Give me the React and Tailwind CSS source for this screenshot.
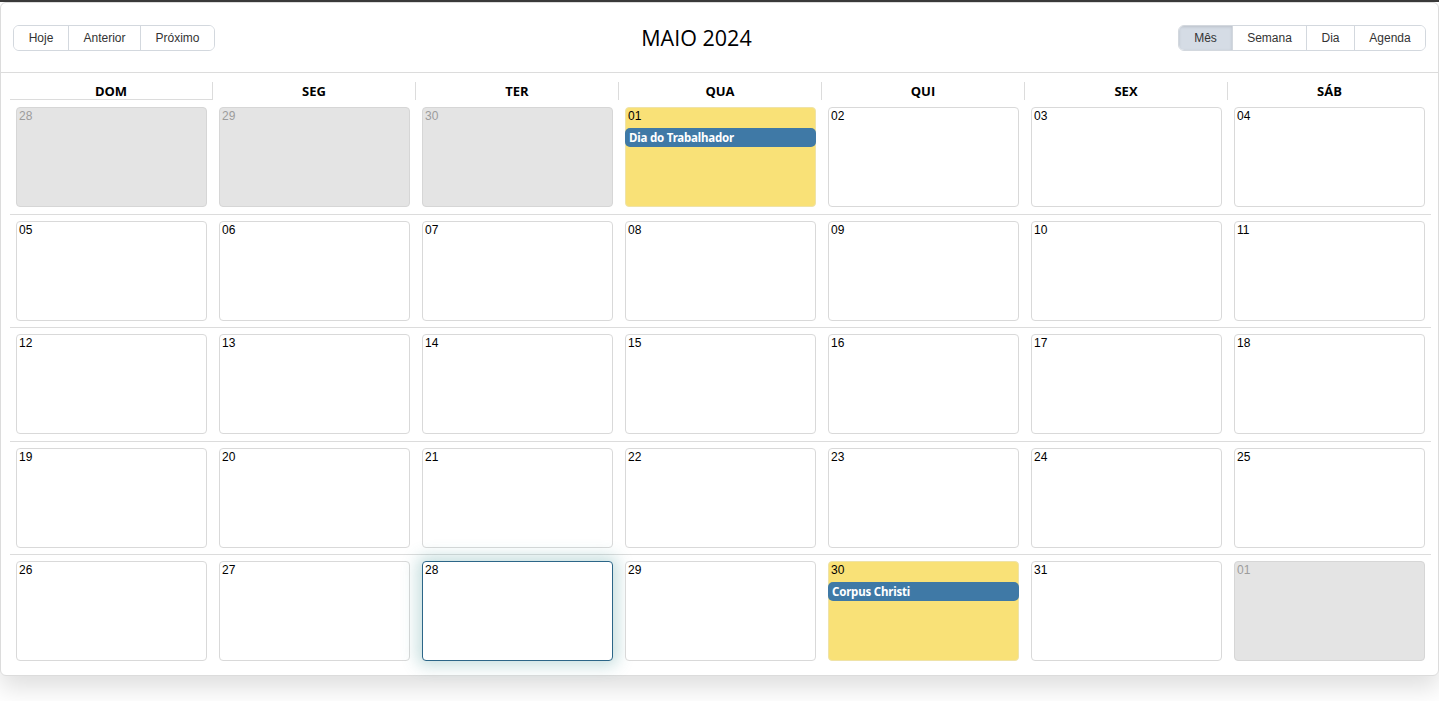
import React from 'react';

const WEEKDAYS = ['DOM', 'SEG', 'TER', 'QUA', 'QUI', 'SEX', 'SÁB'];

// May 2024 grid, starting on Sunday 28/04
const weeks = [
  [{ d: '28', off: true }, { d: '29', off: true }, { d: '30', off: true }, { d: '01', holiday: 'Dia do Trabalhador' }, { d: '02' }, { d: '03' }, { d: '04' }],
  [{ d: '05' }, { d: '06' }, { d: '07' }, { d: '08' }, { d: '09' }, { d: '10' }, { d: '11' }],
  [{ d: '12' }, { d: '13' }, { d: '14' }, { d: '15' }, { d: '16' }, { d: '17' }, { d: '18' }],
  [{ d: '19' }, { d: '20' }, { d: '21' }, { d: '22' }, { d: '23' }, { d: '24' }, { d: '25' }],
  [{ d: '26' }, { d: '27' }, { d: '28', today: true }, { d: '29' }, { d: '30', holiday: 'Corpus Christi' }, { d: '31' }, { d: '01', off: true }],
];

function Group({ items, active }) {
  return (
    <div className="flex h-[26px] rounded-[6px] border border-[#d3d8de] overflow-hidden font-['Liberation_Sans',Arial,sans-serif] text-[12px] text-[#333]">
      {items.map((it, i) => (
        <button
          key={it.label}
          className={`${it.w} flex items-center justify-center ${i > 0 ? 'border-l border-[#d3d8de]' : ''} ${active === it.label ? 'bg-[#d5dce5] shadow-[inset_0_1px_3px_rgba(0,0,0,0.12)]' : 'bg-white'}`}
        >
          {it.label}
        </button>
      ))}
    </div>
  );
}

function DayCell({ day }) {
  let cls = 'h-[100px] rounded-[4px] border ';
  if (day.off) cls += 'bg-[#e4e4e4] border-[#d6d6d6] text-[#9c9c9c]';
  else if (day.holiday) cls += 'bg-[#f9e177] border-[#efe3a8] text-black';
  else if (day.today) cls += 'bg-white border-[#2c6688] text-black shadow-[0_0_16px_5px_rgba(70,150,150,0.3)]';
  else cls += 'bg-white border-[#d9d9d9] text-black';
  return (
    <div className="px-[6px]">
      <div className={cls}>
        <div className="h-[20px] pl-[2px] text-[12px] leading-[16px] font-['Liberation_Sans',Arial,sans-serif]">{day.d}</div>
        {day.holiday && (
          <div className="mx-[-1px] h-[19px] rounded-[5px] bg-[#3f79a6] px-[4px] text-[11.5px] leading-[19px] font-bold text-white font-['Noto_Sans',sans-serif] tracking-[-0.2px]">
            {day.holiday}
          </div>
        )}
      </div>
    </div>
  );
}

export default function App() {
  return (
    <div className="min-h-[701px] bg-white border-t-2 border-[#3a3a3a]">
      <div className="w-[1439px] h-[674px] border border-[#dcdcdc] rounded-[6px] bg-white shadow-[0_12px_24px_rgba(0,0,0,0.13)]">
        {/* Toolbar */}
        <div className="h-[70px] border-b border-[#dcdcdc] px-[12px] flex items-center">
          <Group items={[{ label: 'Hoje', w: 'w-[54px]' }, { label: 'Anterior', w: 'w-[72px]' }, { label: 'Próximo', w: 'w-[74px]' }]} />
          <div className="flex-1 text-center pt-[2px]">
            <span className="text-[21.5px] font-['Open_Sans',sans-serif] text-black">MAIO 2024</span>
          </div>
          <Group active="Mês" items={[{ label: 'Mês', w: 'w-[53px]' }, { label: 'Semana', w: 'w-[74px]' }, { label: 'Dia', w: 'w-[48px]' }, { label: 'Agenda', w: 'w-[71px]' }]} />
        </div>

        {/* Month grid */}
        <div className="pl-[9px] pr-[7px]">
          <div className="grid grid-cols-7 mt-[9px]">
            {WEEKDAYS.map((w, i) => (
              <div
                key={w}
                className={`h-[18px] flex items-center justify-center pt-[2px] text-[13px] font-bold text-black font-['Open_Sans',sans-serif] ${i < 6 ? 'border-r border-[#dcdcdc]' : ''} ${i === 0 ? 'border-b border-[#dcdcdc]' : ''}`}
              >
                {w}
              </div>
            ))}
          </div>
          {weeks.map((wk, r) => (
            <div
              key={r}
              className={`grid grid-cols-7 ${r === 0 ? 'pt-[7px]' : 'pt-[6px]'} pb-[6.5px] ${r < 4 ? 'border-b border-[#dcdcdc]' : ''}`}
            >
              {wk.map((day, c) => (
                <DayCell key={c} day={day} />
              ))}
            </div>
          ))}
        </div>
      </div>
    </div>
  );
}
